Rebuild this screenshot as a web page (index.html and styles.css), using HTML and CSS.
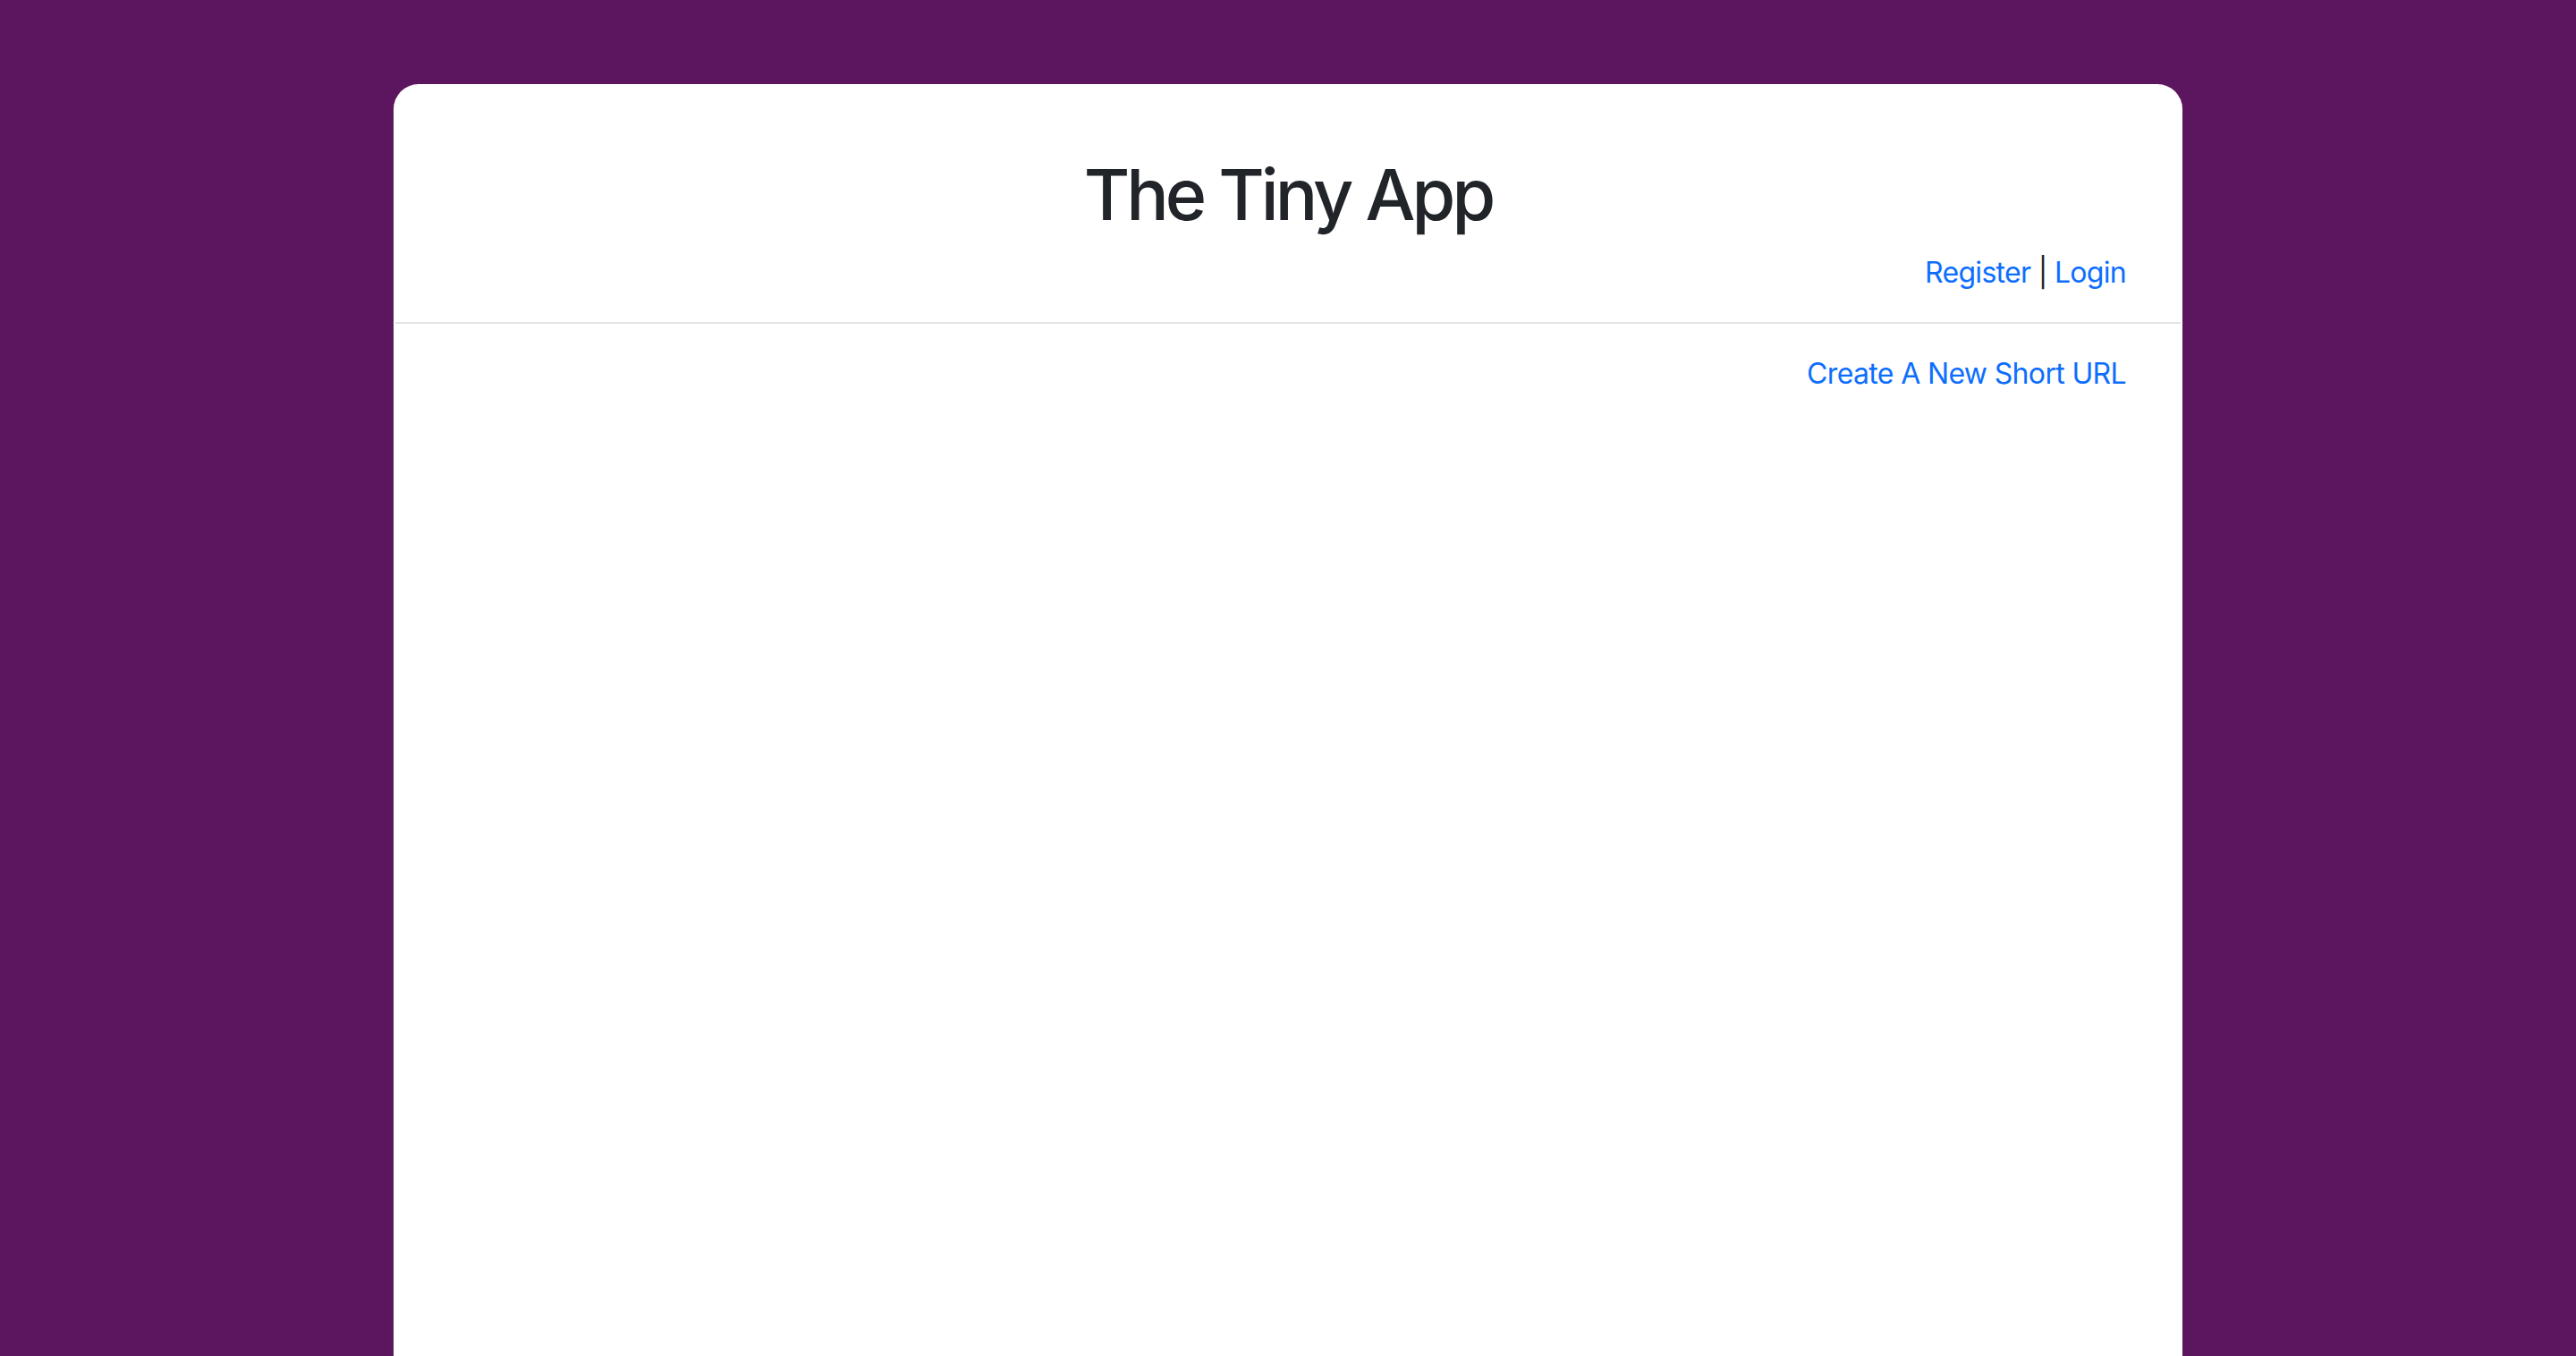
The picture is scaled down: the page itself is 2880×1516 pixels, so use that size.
FILE: index.html
```html
<!DOCTYPE html>
<html lang="en">
<head>
<meta charset="utf-8">
<title>The Tiny App</title>
<link rel="stylesheet" href="styles.css">
</head>
<body>
<main class="card">
  <header class="card-header">
    <h1 class="title">The Tiny App</h1>
    <nav class="auth">
      <a href="#" class="link">Register</a> | <a href="#" class="link">Login</a>
    </nav>
  </header>
  <hr class="divider">
  <section class="content">
    <a href="#" class="link">Create A New Short URL</a>
  </section>
</main>
</body>
</html>
```

FILE: styles.css
```css
html, body {
  margin: 0;
  padding: 0;
}
body {
  background: #5c1660;
  font-family: Inter, "Noto Sans", "Liberation Sans", sans-serif;
  color: #212529;
  height: 1516px;
  overflow: hidden;
}
.card {
  width: 2000px;
  margin: 94px auto 0;
  background: #fff;
  border-radius: 28px 28px 0 0;
  min-height: 1500px;
  display: flex;
  flex-direction: column;
}
.card-header {
  display: flex;
  flex-direction: column;
  padding: 75px 63px 0;
}
.title {
  margin: 0;
  text-align: center;
  font-size: 79px;
  font-weight: 500;
  line-height: 96px;
  letter-spacing: -4px;
}
.auth {
  align-self: flex-end;
  margin-top: 15px;
  font-size: 32px;
  line-height: 50px;
  letter-spacing: -0.7px;
}
.link {
  color: #0d6efd;
  text-decoration: none;
}
.divider {
  margin: 30px 2px 0;
  border: 0;
  height: 2px;
  background: #e5e5e5;
}
.content {
  display: flex;
  justify-content: flex-end;
  padding: 31px 63px 0;
  font-size: 32px;
  line-height: 50px;
  letter-spacing: -0.65px;
}
```
